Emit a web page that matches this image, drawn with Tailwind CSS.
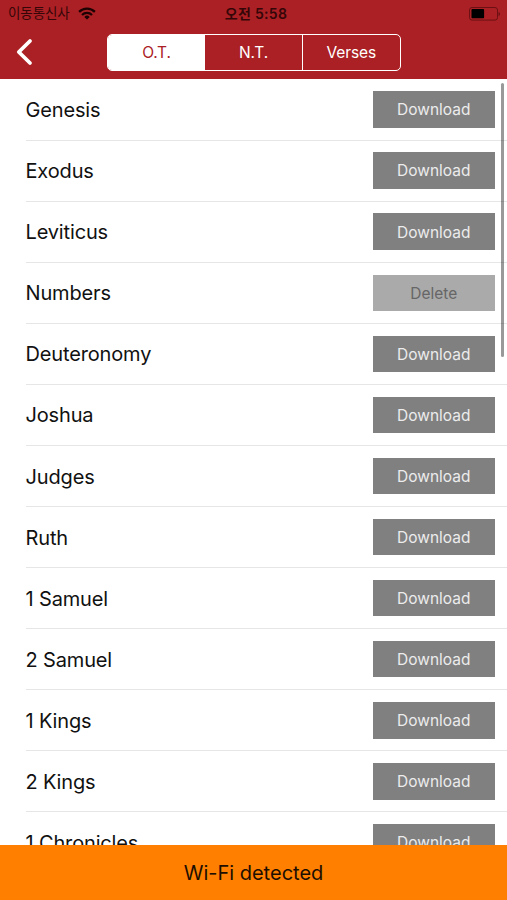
<!DOCTYPE html>
<html lang="ko">
<head>
  <meta charset="UTF-8" />
  <title>Bible Download</title>
  <meta name="viewport" content="width=device-width, initial-scale=1.0" />
  <script src="https://cdn.jsdelivr.net/npm/@tailwindcss/browser@4"></script>
</head>
<body class="h-[900px] w-[507px] flex flex-col overflow-hidden bg-white font-['Inter','Noto_Sans_CJK_KR',sans-serif]">

  <header class="h-[79px] shrink-0 bg-[#ab2024]">
    <!-- Status bar -->
    <div class="h-[27px] grid grid-cols-[1fr_auto_1fr] items-center pl-2 pr-[6px] text-[#350608]">
      <div class="flex items-center gap-[6px]">
        <span class="text-[13.500px] leading-[27px] tracking-[-0.1px] w-[64px] whitespace-nowrap">이동통신사</span>
        <svg class="w-[18px] h-[13px]" viewBox="0 0 18 13" fill="none" stroke="#1c0203" stroke-width="2.3">
          <path d="M1.1 4.9a11.2 11.2 0 0 1 15.8 0" />
          <path d="M4 8a7.1 7.1 0 0 1 10 0" />
          <path d="M9 12.6L6.3 9.9a3.8 3.8 0 0 1 5.4 0z" fill="#1c0203" stroke="none" />
        </svg>
      </div>
      <div class="pt-px pl-[3px] text-[14px] leading-[26px] font-semibold tracking-[0.3px]">오전 5:58</div>
      <svg class="w-[33px] h-[14px] justify-self-end" viewBox="0 0 33 14" fill="none">
        <rect x="1.500" y="0.500" width="28" height="12.6" rx="2.5" stroke="#6c1013" />
        <rect x="3.500" y="2.1" width="12.6" height="9.2" rx="0.8" fill="#000" />
        <path d="M30.500 5v4c2-.5 2-3.500 0-4z" fill="#6c1013" />
      </svg>
    </div>

    <!-- Nav bar -->
    <div class="h-[52px] flex items-start">
      <button class="w-[107px] h-[50px] pl-[15px] text-left">
        <svg class="w-[18px] h-[28px]" viewBox="0 0 18 28" fill="none" stroke="#fff" stroke-width="3.8" stroke-linecap="round" stroke-linejoin="round">
          <path d="M15 3L3.800 14l11.200 11" />
        </svg>
      </button>
      <div class="mt-[7px] w-[293.500px] h-[37px] grid grid-cols-[97px_97px_1fr] overflow-hidden rounded-[5px] border-[1.500px] border-white text-[15.500px] tracking-[-0.1px] text-white">
        <button class="bg-white text-[#ab2024]">O.T.</button>
        <button>N.T.</button>
        <button class="border-l border-white">Verses</button>
      </div>
    </div>
  </header>

  <main class="relative flex-1 min-h-0 overflow-hidden">
    <ul id="books" class="pt-[0.500px]"></ul>
    <div class="absolute top-[4px] right-[3px] w-[3px] h-[274px] rounded-full bg-black/40"></div>
  </main>

  <footer class="h-[55px] shrink-0 flex items-center justify-center bg-[#ff8000] text-xl text-[#1c0e00]">Wi-Fi detected</footer>

  <template id="bookRow">
    <li class="h-[61.090px] pl-[25.500px]">
      <div class="h-full flex items-center justify-between pr-3 border-b border-[#e6e6e6]">
        <span class="name pt-px text-xl tracking-[-0.15px] text-[#111]"></span>
        <button class="h-[36.500px] w-[122.500px] pt-px text-[15.500px] text-center"></button>
      </div>
    </li>
  </template>

  <script>
    const books = ["Genesis", "Exodus", "Leviticus", "Numbers", "Deuteronomy", "Joshua", "Judges", "Ruth", "1 Samuel", "2 Samuel", "1 Kings", "2 Kings", "1 Chronicles"];
    const downloaded = ["Numbers"];
    const list = document.getElementById("books");

    books.forEach((book) => {
      const row = document.getElementById("bookRow").content.cloneNode(true);
      const btn = row.querySelector("button");
      row.querySelector(".name").textContent = book;
      if (downloaded.includes(book)) {
        btn.textContent = "Delete";
        btn.classList.add("bg-[#aaaaaa]", "text-[#666666]");
      } else {
        btn.textContent = "Download";
        btn.classList.add("bg-[#808080]", "text-[#ececec]");
      }
      list.appendChild(row);
    });
  </script>
</body>
</html>
